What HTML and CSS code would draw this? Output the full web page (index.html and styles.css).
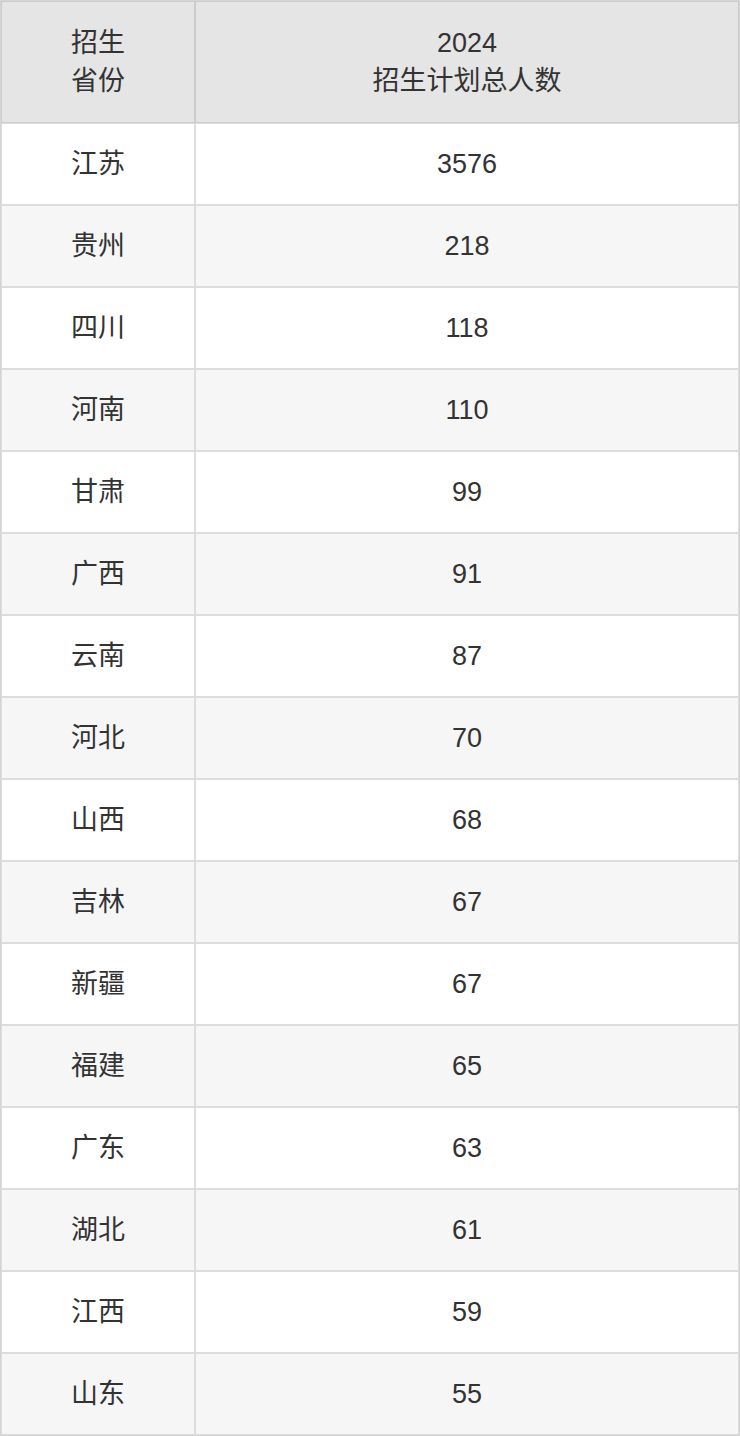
FILE: index.html
```html
<!DOCTYPE html>
<html lang="zh-CN">
<head>
<meta charset="utf-8">
<title>招生计划</title>
<link rel="stylesheet" href="styles.css">
</head>
<body>
<table class="plan">
  <thead>
    <tr>
      <th class="col-prov">招生<br>省份</th>
      <th class="col-num">2024<br>招生计划总人数</th>
    </tr>
  </thead>
  <tbody>
    <tr><td>江苏</td><td>3576</td></tr>
    <tr><td>贵州</td><td>218</td></tr>
    <tr><td>四川</td><td>118</td></tr>
    <tr><td>河南</td><td>110</td></tr>
    <tr><td>甘肃</td><td>99</td></tr>
    <tr><td>广西</td><td>91</td></tr>
    <tr><td>云南</td><td>87</td></tr>
    <tr><td>河北</td><td>70</td></tr>
    <tr><td>山西</td><td>68</td></tr>
    <tr><td>吉林</td><td>67</td></tr>
    <tr><td>新疆</td><td>67</td></tr>
    <tr><td>福建</td><td>65</td></tr>
    <tr><td>广东</td><td>63</td></tr>
    <tr><td>湖北</td><td>61</td></tr>
    <tr><td>江西</td><td>59</td></tr>
    <tr><td>山东</td><td>55</td></tr>
  </tbody>
</table>
</body>
</html>
```

FILE: styles.css
```css
html, body {
  margin: 0;
  padding: 0;
  background: #ffffff;
}

.plan {
  border-collapse: separate;
  border-spacing: 0;
  border: 1px solid #d4d4d4;
  width: 740px;
  table-layout: fixed;
  font-family: "Liberation Sans", "Noto Sans CJK SC", sans-serif;
  font-size: 27px;
  line-height: 38px;
  color: #333333;
}

.plan th,
.plan td {
  padding: 0;
  text-align: center;
  vertical-align: middle;
  box-sizing: content-box;
}

.plan th {
  font-weight: normal;
  background: #e5e5e5;
  border: 1px solid #cccccc;
  height: 120px;
}

.plan .col-prov {
  width: 192px;
}

.plan .col-num {
  width: 542px;
}

.plan td {
  border: 1px solid #dddddd;
  height: 80px;
  background: #ffffff;
}

.plan tbody tr:nth-child(even) td {
  background: #f6f6f6;
}
```
